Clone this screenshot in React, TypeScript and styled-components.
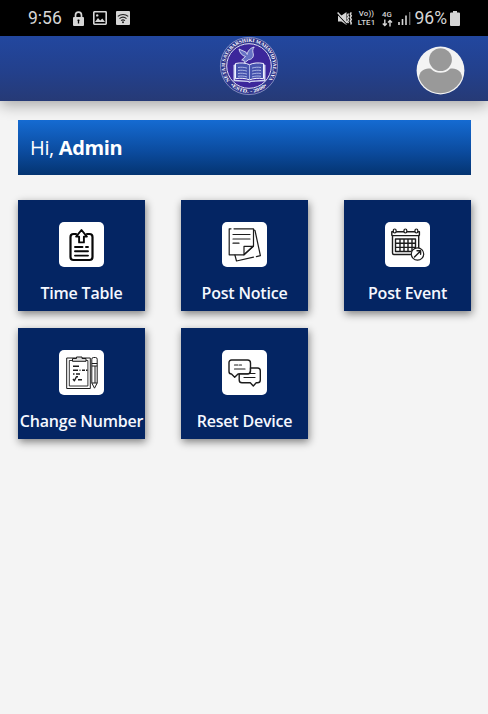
import React from "react";
import styled, { createGlobalStyle } from "styled-components";

const GlobalStyle = createGlobalStyle`
  * { box-sizing: border-box; }
  body { margin: 0; background: #f4f4f4; font-family: "Open Sans", "Noto Sans", sans-serif; }
`;

const Screen = styled.div`
  height: 714px;
  background: #f4f4f4;
  overflow: hidden;
`;

const StatusBar = styled.div`
  display: flex;
  justify-content: space-between;
  align-items: center;
  height: 36px;
  padding: 0 28px;
  background: #000;
  color: #d6d6d6;
  font-family: Roboto, sans-serif;
`;

const StatusGroup = styled.div<{ $gap: number }>`
  display: flex;
  align-items: center;
  gap: ${(p) => p.$gap}px;
`;

const StatusText = styled.span<{ $after?: number }>`
  margin-right: ${(p) => p.$after ?? 0}px;
  font-size: 17.5px;
  line-height: 36px;
`;

const StackedText = styled.span<{ $width: number }>`
  display: flex;
  flex-direction: column;
  align-items: center;
  width: ${(p) => p.$width}px;
  font-size: 7.8px;
  font-weight: 500;
  line-height: 9px;
  letter-spacing: 0.2px;
  white-space: nowrap;
`;

const Header = styled.header`
  display: grid;
  grid-template-columns: 1fr 60px 1fr;
  align-items: center;
  height: 65px;
  padding: 0 23px 0 33px;
  background: linear-gradient(#22479f, #23408c 55%, #263a76);
  box-shadow: 0 4px 14px rgba(0, 0, 0, 0.32);
`;

const Logo = styled.svg`
  grid-column: 2;
  width: 60px;
  height: 60px;
  margin-top: -5px;
`;

const Avatar = styled.svg`
  justify-self: end;
  width: 49px;
  height: 49px;
  margin-top: 4px;
`;

const Content = styled.main`
  padding: 19px 17px 0 18px;
`;

const Greeting = styled.section`
  display: flex;
  align-items: center;
  height: 55px;
  padding: 0 12px 1px;
  background: linear-gradient(#156bd2, #0b4b9e 58%, #043471);
  color: #fff;
  font-size: 20px;
  letter-spacing: -0.35px;
  white-space: pre;
`;

const Grid = styled.div`
  display: grid;
  grid-template-columns: repeat(3, 127px);
  grid-auto-rows: 111px;
  column-gap: 36px;
  row-gap: 17px;
  margin-top: 25px;
`;

const Card = styled.button`
  display: flex;
  flex-direction: column;
  align-items: center;
  padding: 22px 0 0;
  border: 0;
  background: #042563;
  box-shadow: 1px 3px 8px rgba(0, 0, 0, 0.48);
  color: #f5f8ff;
  font: 600 16px/22px "Open Sans", "Noto Sans", sans-serif;
  letter-spacing: -0.2px;
  white-space: nowrap;
`;

const Tile = styled.span`
  display: block;
  width: 45px;
  height: 45px;
  margin-bottom: 15px;
  border-radius: 5px;
  background: #fff;
`;

const Drawing = styled.svg`
  display: block;
  width: 45px;
  height: 45px;
  fill: none;
  stroke: #1c1c1c;
  stroke-width: 1.2;
  stroke-linecap: round;
  stroke-linejoin: round;
`;

const TimeTableIcon = () => (
  <Drawing viewBox="0 0 45 45">
    <path strokeWidth="2.2" d="M17 12h-2.5a3 3 0 0 0-3 3v20a3 3 0 0 0 3 3h16a3 3 0 0 0 3-3V15a3 3 0 0 0-3-3H28" stroke="#080808" />
    <path strokeWidth="1.9" d="M22.5 8l-5.4 6.6h3v5.8h4.8v-5.8h3z" stroke="#080808" fill="#fff" />
    <path strokeWidth="1.9" d="M16 25h7.5M27 25h2M16 29.3h13M16 33.6h13" stroke="#080808" />
  </Drawing>
);

const NoticeIcon = () => (
  <Drawing viewBox="0 0 45 45">
    <path d="M9 6.8H7.2v26H22l9.5-9v-17H12" />
    <path d="M22 32.8v-8.5h9.5z" />
    <path d="M11 12.5h17M11 17h17M11 21.2h6" />
    <path d="M32 8l1 .5 5.4 25.2-4 .9M31.5 35.2l-17 3.8-1.6-6" />
  </Drawing>
);

const EventIcon = () => (
  <Drawing viewBox="0 0 45 45">
    <path strokeWidth="1.4" d="M27 32.5H9A1.5 1.5 0 0 1 7.5 31V14L6.8 13V9.8h27.6V13l-.7 1v13M7 13.6h27" />
    <g fill="#fff">
      <rect x="8.3" y="7" width="2.8" height="4" rx="1.4" />
      <rect x="19" y="7" width="2.8" height="4" rx="1.4" />
      <rect x="30" y="7" width="2.8" height="4" rx="1.4" />
    </g>
    <path strokeWidth="1.4" d="M10.5 17h20v12.5h-20zM15 17v12.5M19 17v12.5M23 17v12.5M27 17v12.5M10.5 21.2h20M10.5 25.4h20" />
    <circle cx="32.5" cy="32" r="6.2" fill="#fff" />
    <path strokeWidth="1.4" d="M29.5 35l6-6M32 28.7h3.6v3.5" />
  </Drawing>
);

const NumberIcon = () => (
  <Drawing viewBox="0 0 45 45">
    <g strokeLinecap="butt">
      <path strokeWidth="1" d="M7.7 8h23.6v30.5H7.7z" />
      <path strokeWidth=".9" d="M10.3 10.5h18.6V36H10.3z" />
      <path strokeWidth="1" fill="#ddd" d="M13.5 8.5h4V7h5.5v1.5h4v2.8H13.5z" />
      <path strokeWidth="1.4" d="M14 16.3h6M14 20.2h5M20.5 20.2h1M23 20.2h3M27 20.2h1.5M14 24h1.5M17 24h4" />
      <path strokeWidth="1.4" d="M14 29l1.4 1.8 2-4h1.6M19 29.8h4" />
      <path strokeWidth="1" fill="#fff" d="M32.8 9.2a1.7 1.7 0 0 1 1.7-1.7h2a1.7 1.7 0 0 1 1.7 1.7V33l-2.7 5.2-2.7-5.2z" />
      <path strokeWidth="1" d="M32.8 13.5h5.4M32.8 16h5.4M36 16v17M32.8 33h5.4" />
    </g>
  </Drawing>
);

const DeviceIcon = () => (
  <Drawing viewBox="0 0 45 45">
    <path strokeWidth="1.4" d="M9.5 10h16a3 3 0 0 1 3 3v8a3 3 0 0 1-3 3H16l-3.3 3.2L9.5 24A2.5 2.5 0 0 1 7 21.5v-9A2.5 2.5 0 0 1 9.5 10z" />
    <path strokeWidth="1.2" d="M12.5 15h3.5M17.5 15h2M12.5 19h10.5" />
    <path strokeWidth="1.4" fill="#fff" d="M28.5 18h7a2.8 2.8 0 0 1 2.8 2.8V30a2.8 2.8 0 0 1-2.8 2.8h-1.3L31.3 36l-3-3.2H20a2.8 2.8 0 0 1-2.8-2.8v-6h8.3a3 3 0 0 0 3-3z" />
    <path strokeWidth="1.2" d="M27.5 23.5h5.5M22 27.5h11" />
  </Drawing>
);

const actions = [
  { label: "Time Table", Icon: TimeTableIcon },
  { label: "Post Notice", Icon: NoticeIcon },
  { label: "Post Event", Icon: EventIcon },
  { label: "Change Number", Icon: NumberIcon },
  { label: "Reset Device", Icon: DeviceIcon },
];

const LockIcon = () => (
  <svg width="11" height="15" viewBox="0 0 11 15">
    <path d="M2.5 7V4.2a3 3 0 0 1 6 0V7" fill="none" stroke="#d6d6d6" strokeWidth="1.7" />
    <rect y="6" width="11" height="9" rx="1" fill="#d6d6d6" />
    <path d="M5.5 8.5v4M4.5 9.3h2" stroke="#000" strokeWidth="1.3" />
  </svg>
);

const PictureIcon = () => (
  <svg width="14" height="14" viewBox="0 0 14 14">
    <rect x=".8" y=".8" width="12.4" height="12.4" rx=".6" fill="none" stroke="#d6d6d6" strokeWidth="1.6" />
    <path d="M2 11l3-4 2.2 2.4 2.1-1.9L12 11z" fill="#d6d6d6" />
    <circle cx="4.2" cy="4.4" r="1.2" fill="#d6d6d6" />
  </svg>
);

const WifiIcon = () => (
  <svg width="14" height="14" viewBox="0 0 14 14">
    <rect width="14" height="14" rx="1" fill="#d6d6d6" />
    <path d="M1.8 5.4a8 8 0 0 1 10.4 0M3.5 7.6a5.4 5.4 0 0 1 7 0M5.1 9.6a3 3 0 0 1 3.8 0" fill="none" stroke="#222" strokeWidth="1.2" />
    <circle cx="7" cy="11.3" r="1" fill="#222" />
  </svg>
);

const MuteIcon = () => (
  <svg width="16" height="15" viewBox="0 0 16 15">
    <path d="M1 4.5h3.5L9.5 1v13L4.5 10.5H1z" fill="#d6d6d6" />
    <path d="M.3 2.8L9.7 13" stroke="#000" strokeWidth="1.1" />
    <path d="M.6 1.4L10.2 11.8" stroke="#d6d6d6" strokeWidth="1.5" />
    <path d="M11.5 2.5l-.9 1.6.9 1.6-.9 1.6.9 1.6-.9 1.6.9 1.6M14.3 1.3l-1 1.7 1 1.8-1 1.8 1 1.8-1 1.8 1 1.8-.6 1.5" fill="none" stroke="#d6d6d6" strokeWidth="1.5" />
  </svg>
);

const DataArrows = () => (
  <svg width="11" height="8" viewBox="0 0 11 8">
    <path d="M2.8.5V6.5M.8 4.6l2 2 2-2M8 7.5v-6M6 3.4l2-2 2 2" fill="none" stroke="#d6d6d6" strokeWidth="1.4" />
  </svg>
);

const SignalIcon = () => (
  <svg width="13" height="14" viewBox="0 0 13 14">
    <path d="M1 11v3M4.5 8v6M8 4.5V14" stroke="#d6d6d6" strokeWidth="1.6" />
    <path d="M11.7 1v13" stroke="#686868" strokeWidth="1.4" />
  </svg>
);

const BatteryIcon = () => (
  <svg width="10" height="15" viewBox="0 0 10 15">
    <path d="M3 0h4v1.5h2a1 1 0 0 1 1 1V14a1 1 0 0 1-1 1H1a1 1 0 0 1-1-1V2.5a1 1 0 0 1 1-1h2z" fill="#d6d6d6" />
  </svg>
);

const CollegeLogo = () => (
  <Logo viewBox="0 0 60 60" role="img">
    <defs>
      <path id="ring-top" d="M10.9 44.4A24 24 0 1 1 49.1 44.4" />
      <path id="ring-bottom" d="M11.4 49.3A26.8 26.8 0 0 0 48.6 49.3" />
    </defs>
    <circle cx="30" cy="30" r="28.6" fill="#30378d" stroke="#b9bfdf" strokeWidth=".6" />
    <circle cx="30" cy="30" r="22.3" fill="#3c279b" stroke="#dfe0f4" strokeWidth="1" />
    <g fill="#fff" fontFamily="Liberation Serif, serif" fontWeight="700" fontSize="5">
      <text>
        <textPath href="#ring-top" textLength="105" lengthAdjust="spacingAndGlyphs">NETAJI SATABARSHIKI MAHAVIDYALAYA</textPath>
      </text>
      <text>
        <textPath href="#ring-bottom" textLength="40" lengthAdjust="spacingAndGlyphs">•ESTD. - 2000•</textPath>
      </text>
    </g>
    <path
      d="M20 13l7 3.2 1.2 2.3c.3-3.5 3-6.5 7-7.5-2 2.3-1.5 4.7-.9 6.9.6 3.2-1.5 5.6-4.8 5.8l-4 3.2-.5-2.5-2.3-.4 3.8-3.5c-3.4-.8-6-3.6-6.5-7.5z"
      fill="#6672c4" stroke="#e8ebfb" strokeWidth=".8"
    />
    <path d="M14.5 29l1.5-.7v15.4l13.5 1 1 .9 1-.9 13.5-1V28.3l1.5.7v16.3l-14.5.7-1.5 1-1.5-1-14.5-.7z" fill="#cfd5f1" />
    <path d="M16.5 27.5c5-1 10-.8 14 1.2 4-2 9-2.2 14-1.2v15.2c-5-.8-10-.5-14 1.2-4-1.7-9-2-14-1.2z" fill="#4653ae" stroke="#f1f2ff" strokeWidth="1" />
    <path d="M30.5 29v14.5M19 31.5c3-.5 6-.3 9 .6M19 34.5c3-.5 6-.3 9 .6M19 37.5c3-.5 6-.3 9 .6M19 40.3c3-.5 6-.3 9 .6M33 32.1c3-.9 6-1.1 9-.6M33 35.1c3-.9 6-1.1 9-.6M33 38.1c3-.9 6-1.1 9-.6M33 40.9c3-.9 6-1.1 9-.6" fill="none" stroke="#c3cbef" strokeWidth=".8" />
  </Logo>
);

const UserAvatar = () => (
  <Avatar viewBox="0 0 49 49">
    <defs>
      <clipPath id="avatar-disc"><circle cx="24.5" cy="24.5" r="22.7" /></clipPath>
    </defs>
    <circle cx="24.5" cy="24.5" r="23.9" fill="#f3f3f3" />
    <g clipPath="url(#avatar-disc)" fill="#999">
      <path d="M3 49V32c0-6 4.5-9.5 9.5-9.5h24c5 0 9.5 3.5 9.5 9.5v17z" />
      <circle cx="24.5" cy="13.6" r="13.2" fill="#f3f3f3" />
      <circle cx="24.5" cy="13.6" r="11.4" />
    </g>
  </Avatar>
);

export default function App() {
  return (
    <>
      <GlobalStyle />
      <Screen>
        <StatusBar>
          <StatusGroup $gap={9}>
            <StatusText $after={2}>9:56</StatusText>
            <LockIcon />
            <PictureIcon />
            <WifiIcon />
          </StatusGroup>
          <StatusGroup $gap={4}>
            <MuteIcon />
            <StackedText $width={20}><span>Vo))</span><span>LTE1</span></StackedText>
            <StackedText $width={13}><span>4G</span><DataArrows /></StackedText>
            <SignalIcon />
            <StatusText $after={-1}>96%</StatusText>
            <BatteryIcon />
          </StatusGroup>
        </StatusBar>
        <Header>
          <CollegeLogo />
          <UserAvatar />
        </Header>
        <Content>
          <Greeting>Hi, <strong>Admin</strong></Greeting>
          <Grid>
            {actions.map(({ label, Icon }) => (
              <Card key={label}>
                <Tile><Icon /></Tile>
                {label}
              </Card>
            ))}
          </Grid>
        </Content>
      </Screen>
    </>
  );
}
